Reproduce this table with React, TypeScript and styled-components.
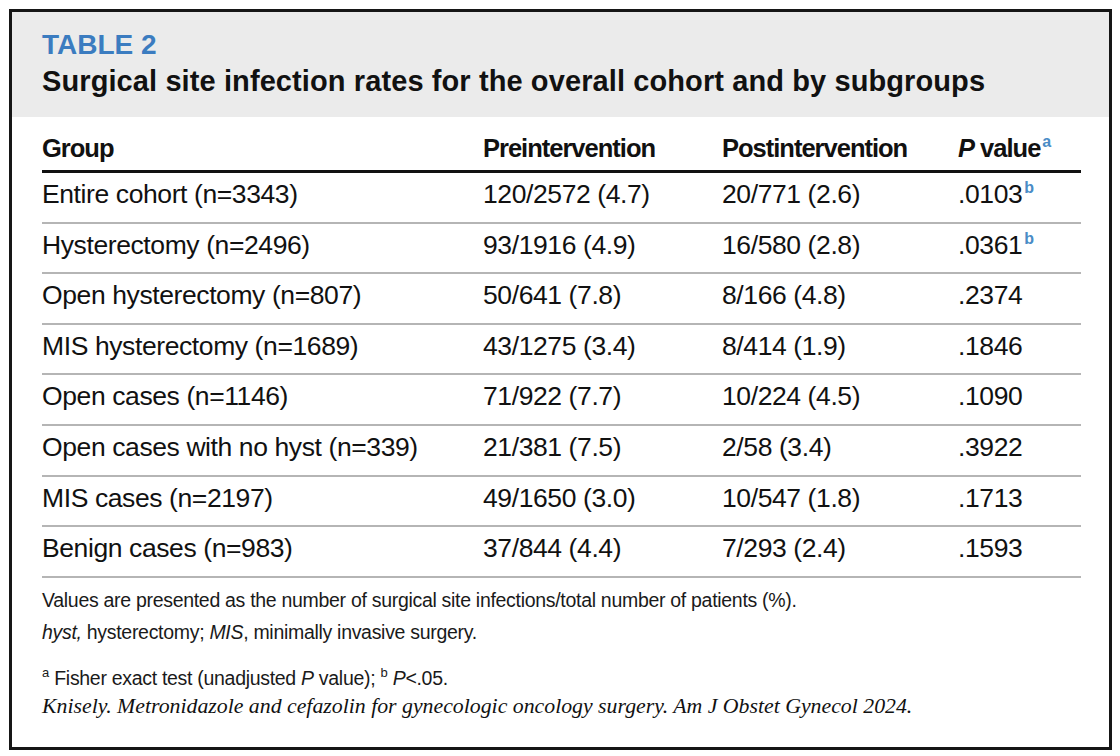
import React from "react";
import styled, { createGlobalStyle } from "styled-components";

const Global = createGlobalStyle`
  html, body { margin: 0; padding: 0; background: #ffffff; }
  * { box-sizing: border-box; }
`;

const SANS = `"Liberation Sans", Arial, Helvetica, sans-serif`;

const Frame = styled.div`
  margin: 9px 0 0 9px;
  width: 1103px;
  height: 741px;
  border: 3px solid #161616;
  background: #ffffff;
  display: flex;
  flex-direction: column;
`;

const TitleBand = styled.header`
  background: #ebebeb;
  height: 105px;
  padding: 19px 28px 0 30px;
`;

const Label = styled.div`
  font-family: ${SANS};
  font-weight: 700;
  font-size: 28px;
  line-height: 28px;
  color: #3b7cc0;
`;

const Title = styled.h1`
  margin: 5px 0 0;
  font-family: ${SANS};
  font-weight: 700;
  font-size: 29px;
  line-height: 34px;
  letter-spacing: 0.1px;
  color: #111111;
`;

const Body = styled.div`
  padding: 0 28px 0 30px;
  display: flex;
  flex-direction: column;
`;

const Grid = styled.div<{ $head?: boolean }>`
  display: grid;
  grid-template-columns: 441px 239px 236px 1fr;
  font-family: ${SANS};
  color: #111111;
  font-size: ${(p) => (p.$head ? "25.5px" : "26.5px")};
  line-height: 28px;
  font-weight: ${(p) => (p.$head ? 700 : 400)};
  letter-spacing: ${(p) => (p.$head ? "-1px" : "-0.4px")};
  height: ${(p) => (p.$head ? "56px" : "50.6px")};
  padding-top: ${(p) => (p.$head ? "17px" : "7px")};
  border-bottom: ${(p) => (p.$head ? "3px solid #111111" : "2px solid #b5b5b5")};
`;

const Cell = styled.div`
  white-space: nowrap;
`;

const Ital = styled.i`
  font-style: italic;
`;

const BlueSup = styled.sup`
  font-family: ${SANS};
  font-weight: 700;
  font-size: 16px;
  color: #4a8cc6;
  line-height: 0;
  vertical-align: 10px;
  margin-left: 2px;
  letter-spacing: 0;
`;

const Notes = styled.div`
  padding: 6px 28px 0 30px;
  font-family: ${SANS};
  color: #1a1a1a;
  font-size: 19.5px;
  letter-spacing: -0.3px;
`;

const Note = styled.p<{ $gap?: number; $lh?: number }>`
  margin: ${(p) => p.$gap ?? 0}px 0 0;
  line-height: ${(p) => p.$lh ?? 32}px;
`;

const NoteSup = styled.sup`
  font-size: 13px;
  line-height: 0;
  vertical-align: 8px;
  margin-right: 5px;
  letter-spacing: 0;
`;

const Cite = styled.p`
  margin: 2px 0 0;
  font-family: "Liberation Serif", "Times New Roman", serif;
  font-style: italic;
  font-size: 21.8px;
  line-height: 24px;
  letter-spacing: 0;
  color: #111111;
`;

type Row = { g: string; pre: string; post: string; p: string; sig?: boolean };

const rows: Row[] = [
  { g: "Entire cohort (n=3343)", pre: "120/2572 (4.7)", post: "20/771 (2.6)", p: ".0103", sig: true },
  { g: "Hysterectomy (n=2496)", pre: "93/1916 (4.9)", post: "16/580 (2.8)", p: ".0361", sig: true },
  { g: "Open hysterectomy (n=807)", pre: "50/641 (7.8)", post: "8/166 (4.8)", p: ".2374" },
  { g: "MIS hysterectomy (n=1689)", pre: "43/1275 (3.4)", post: "8/414 (1.9)", p: ".1846" },
  { g: "Open cases (n=1146)", pre: "71/922 (7.7)", post: "10/224 (4.5)", p: ".1090" },
  { g: "Open cases with no hyst (n=339)", pre: "21/381 (7.5)", post: "2/58 (3.4)", p: ".3922" },
  { g: "MIS cases (n=2197)", pre: "49/1650 (3.0)", post: "10/547 (1.8)", p: ".1713" },
  { g: "Benign cases (n=983)", pre: "37/844 (4.4)", post: "7/293 (2.4)", p: ".1593" },
];

export default function App() {
  return (
    <>
      <Global />
      <Frame>
        <TitleBand>
          <Label>TABLE 2</Label>
          <Title>Surgical site infection rates for the overall cohort and by subgroups</Title>
        </TitleBand>
        <Body>
          <Grid $head>
            <Cell>Group</Cell>
            <Cell>Preintervention</Cell>
            <Cell>Postintervention</Cell>
            <Cell>
              <Ital>P</Ital> value<BlueSup>a</BlueSup>
            </Cell>
          </Grid>
          {rows.map((r) => (
            <Grid key={r.g}>
              <Cell>{r.g}</Cell>
              <Cell>{r.pre}</Cell>
              <Cell>{r.post}</Cell>
              <Cell>
                {r.p}
                {r.sig && <BlueSup>b</BlueSup>}
              </Cell>
            </Grid>
          ))}
        </Body>
        <Notes>
          <Note>Values are presented as the number of surgical site infections/total number of patients (%).</Note>
          <Note>
            <Ital>hyst,</Ital> hysterectomy; <Ital>MIS</Ital>, minimally invasive surgery.
          </Note>
          <Note $gap={16} $lh={28}>
            <NoteSup>a</NoteSup>Fisher exact test (unadjusted <Ital>P</Ital> value);{" "}
            <NoteSup>b</NoteSup>
            <Ital>P</Ital>&lt;.05.
          </Note>
          <Cite>
            Knisely. Metronidazole and cefazolin for gynecologic oncology surgery. Am J Obstet Gynecol 2024.
          </Cite>
        </Notes>
      </Frame>
    </>
  );
}
